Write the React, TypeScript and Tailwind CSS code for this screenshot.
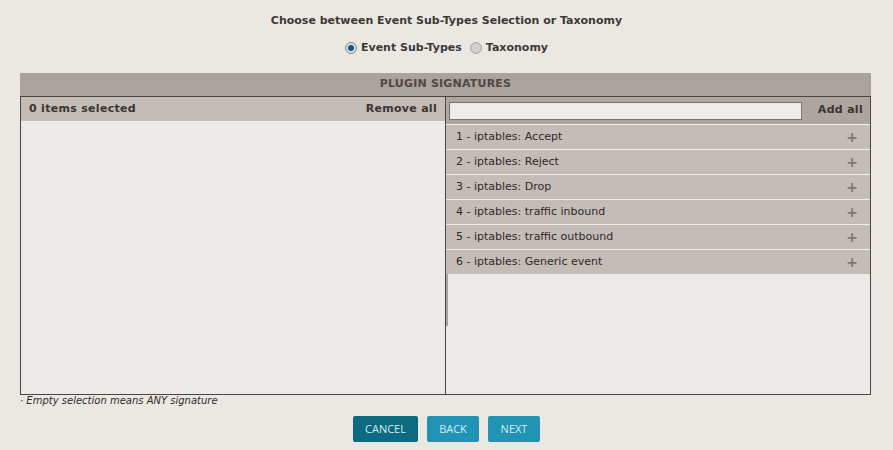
import React from "react";

const items = [
  "1 - iptables: Accept",
  "2 - iptables: Reject",
  "3 - iptables: Drop",
  "4 - iptables: traffic inbound",
  "5 - iptables: traffic outbound",
  "6 - iptables: Generic event",
];

const verdana = { fontFamily: '"DejaVu Sans", Verdana, sans-serif' };

export default function App() {
  return (
    <div className="h-[450px] w-[893px] overflow-hidden bg-[#ebe8e4] text-[#3a3431]" style={verdana}>
      <div className="pt-[14px] text-center text-[11px] font-bold leading-[14px] text-[#3d3835]">
        Choose between Event Sub-Types Selection or Taxonomy
      </div>

      <div className="mt-[13px] flex items-center justify-center gap-[4px] text-[11px] font-bold leading-[14px] text-[#3d3835]">
        <span className="flex h-[12px] w-[12px] items-center justify-center rounded-full border border-[#8a8a8a] bg-[#d9dde2]">
          <span className="h-[6px] w-[6px] rounded-full bg-[#1c4f7a]" />
        </span>
        <span className="mr-[4px]">Event Sub-Types</span>
        <span className="h-[12px] w-[12px] rounded-full border border-[#a5a5a5] bg-[#cfcfcf]" />
        <span>Taxonomy</span>
      </div>

      <div className="mx-[20px] mt-[18px] w-[851px]">
        <div className="flex h-[23px] items-center justify-center bg-[#aaa29d] text-[11px] font-bold tracking-[0.2px] text-[#4f4845]">
          PLUGIN SIGNATURES
        </div>

        <div className="flex h-[299px] border border-[#4b4541] bg-[#ece9e6]">
          <div className="flex w-[425px] flex-col border-r border-[#4b4541]">
            <div className="flex h-[24px] items-center justify-between bg-[#c3bcb7] px-[8px] text-[11px] font-bold tracking-[0.3px] text-[#3a3431]">
              <span>0 items selected</span>
              <span>Remove all</span>
            </div>
          </div>

          <div className="flex flex-1 flex-col">
            <div className="flex h-[27px] items-center justify-between bg-[#ada59f] pl-[3px] pr-[7px]">
              <input
                className="h-[18px] w-[353px] border border-[#7a726e] bg-[#eeebe8] outline-none"
                readOnly
              />
              <span className="text-[11px] font-bold tracking-[0.3px] text-[#3a3431]">Add all</span>
            </div>
            {items.map((item) => (
              <div
                key={item}
                className="flex h-[25px] items-center justify-between border-t border-[#f2eeea] bg-[#c3bcb7] pl-[10px] pr-[12px] text-[11px] text-[#2f2a28]"
              >
                <span>{item}</span>
                <span className="text-[14px] font-bold leading-none text-[#7e7773]">+</span>
              </div>
            ))}
            <div className="flex h-[52px]">
              <div className="w-[2px] bg-[#a9a19c]" />
              <div className="flex-1 bg-[#ece9e6]" />
            </div>
          </div>
        </div>

        <div className="mt-[0px] text-[10px] italic leading-[12px] text-[#2f2a28]">
          · Empty selection means ANY signature
        </div>
      </div>

      <div
        className="mt-[9px] flex justify-center gap-[9px] text-[11px] text-[#d2eef6]"
        style={{ fontFamily: '"Open Sans", sans-serif' }}
      >
        <button className="h-[26px] w-[65px] rounded-[2px] bg-[#0e6a80]">CANCEL</button>
        <button className="h-[26px] w-[52px] rounded-[2px] bg-[#2194b3]">BACK</button>
        <button className="h-[26px] w-[52px] rounded-[2px] bg-[#2194b3]">NEXT</button>
      </div>
    </div>
  );
}
